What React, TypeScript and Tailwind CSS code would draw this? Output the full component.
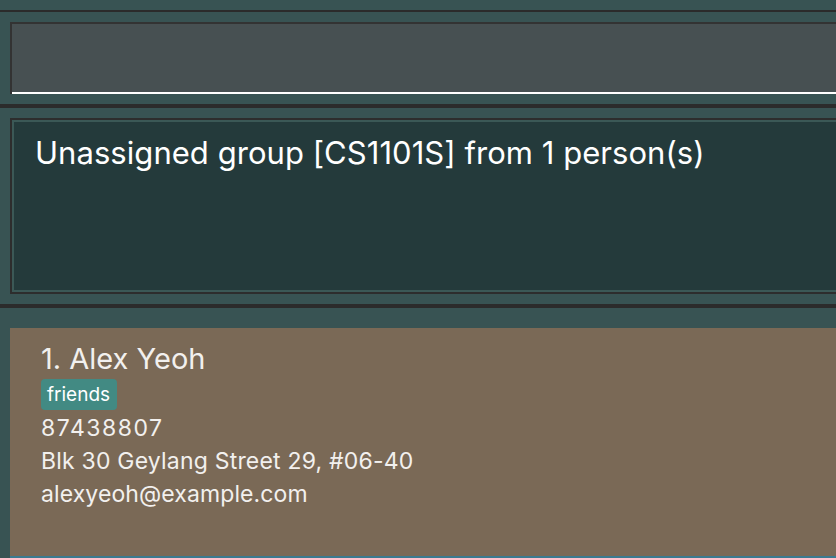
import React from "react";

export default function App() {
  return (
    <div
      className="w-[836px] h-[558px] overflow-hidden bg-[#385353] flex flex-col"
      style={{ fontFamily: "Inter, 'Noto Sans', sans-serif" }}
    >
      <div className="h-[10px] shrink-0" />
      <div className="border-t-2 border-[#2b2b2b] pt-[10px] pb-[10px] shrink-0">
        <div className="ml-[10px] border-t-2 border-l-2 border-[#333333]">
          <div className="h-[70px] bg-[#475052] border-b-2 border-white" />
        </div>
      </div>
      <div className="border-t-4 border-[#2b2b2b] pt-[10px] pb-[10px] shrink-0">
        <div className="ml-[10px] border-2 border-r-0 border-[#2d2d2d]">
          <div className="h-[172px] border-2 border-r-0 border-[#3b5856] bg-[#243a3b] pl-[21px] pt-[11px]">
            <div className="text-[31px] leading-[40px] text-white whitespace-nowrap tracking-[0.05px]">
              Unassigned group [CS1101S] from 1 person(s)
            </div>
          </div>
        </div>
      </div>
      <div className="border-t-4 border-[#2b2b2b] pt-[20px] flex-1 flex flex-col">
        <div className="ml-[10px] flex-1 bg-[#7a6956] border-b-2 border-[#3a7a90] pl-[31px] pt-[14px] text-[#f2f0ee]">
          <div className="text-[29px] leading-[34px]">1. Alex Yeoh</div>
          <div className="mt-[3px] flex">
            <span className="bg-[#428a83] rounded-[4px] h-[31px] pl-[6px] pr-[7px] text-[19px] leading-[31px] text-white">
              friends
            </span>
          </div>
          <div className="text-[23px] leading-[33px] mt-[2px] tracking-[1.5px]">87438807</div>
          <div className="text-[23px] leading-[33px] whitespace-nowrap tracking-[0.2px]">
            Blk 30 Geylang Street 29, #06-40
          </div>
          <div className="text-[23px] leading-[33px] tracking-[0.1px]">alexyeoh@example.com</div>
        </div>
      </div>
    </div>
  );
}
